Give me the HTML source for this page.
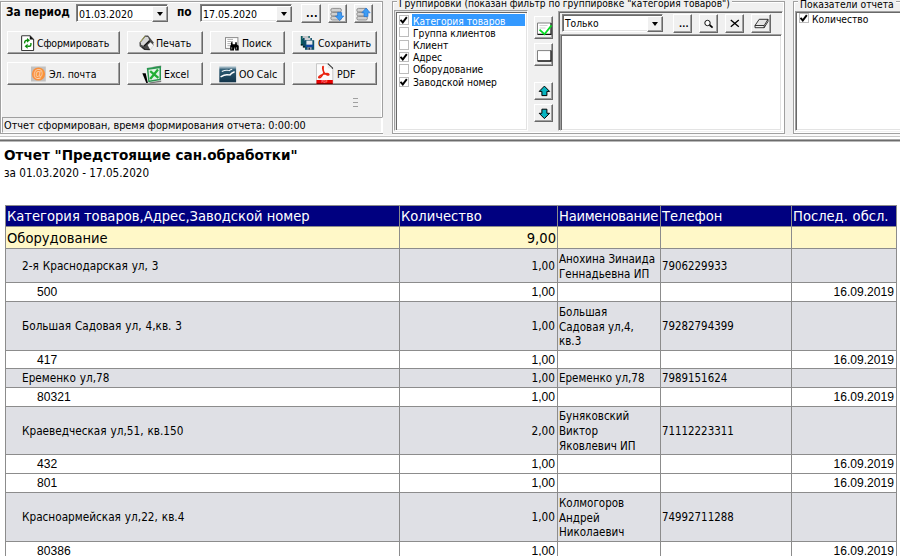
<!DOCTYPE html>
<html lang="ru"><head><meta charset="utf-8"><title>Отчет</title>
<style>
*{box-sizing:border-box;margin:0;padding:0}
html,body{width:900px;height:556px;overflow:hidden;background:#fff}
body{position:relative;font-family:"DejaVu Sans Condensed","DejaVu Sans","Liberation Sans",sans-serif;font-stretch:condensed;font-size:10px;color:#000}
.abs{position:absolute}
#top{left:0;top:0;width:900px;height:134px;background:#f0f0f0}
.btn{position:absolute;height:23px;background:#f0f0f0;border:1px solid;border-color:#fff #696969 #696969 #fff;box-shadow:inset -1px -1px 0 #a0a0a0;white-space:nowrap}
.btn span{position:absolute;top:5px;line-height:13px;font-size:10.5px}
.btn svg{position:absolute}
.t{position:absolute;white-space:nowrap;line-height:12px}
.inp{position:absolute;background:#fff;border:1px solid;border-color:#828282 #fff #fff #828282;box-shadow:inset 1px 1px 0 #696969, inset -1px -1px 0 #e3e3e3}
.dd{position:absolute;right:-1px;top:1px;bottom:-1px;width:16px;background:#f0f0f0;border:1px solid;border-color:#fff #696969 #696969 #fff;box-shadow:inset -1px -1px 0 #a0a0a0}
.dd:after{content:"";position:absolute;left:4px;top:5px;border:3.5px solid transparent;border-top:4px solid #000;border-bottom:0}
.gb{position:absolute;border:1px solid #a0a0a0;box-shadow:inset 0 0 0 1px #fff}
.lb{position:absolute;background:#fff;border:1px solid;border-color:#a0a0a0 #fff #fff #a0a0a0;box-shadow:inset 1px 1px 0 #696969, inset -1px -1px 0 #e3e3e3}
.cb{position:absolute;width:10px;height:10px;background:#fff;border:1px solid #bcbcbc}
table{position:absolute;left:5px;top:205px;border-collapse:collapse;table-layout:fixed;width:892px}
td{border:1px solid #8c8c8c;padding:0 1px 0 1px;vertical-align:middle;font-size:11.7px;line-height:14px;overflow:hidden;word-spacing:0.6px}
tr.h td{background:#000080;color:#fff;font-size:14.6px;line-height:18px;white-space:nowrap;padding:0 0 0 1px;word-spacing:0}
tr.y td{background:#fff8c8;font-size:14.6px;line-height:18px;padding:0 1px 0 1px}
tr.g td{background:#dfe0e5}
tr.w td{background:#fff;font-family:"Liberation Sans",sans-serif;font-size:12.1px}
td.r{text-align:right;padding-right:2px}
td.n{font-size:11.5px;word-spacing:0;line-height:14.7px}
td.m{padding-top:2px}
td.p{font-size:11.4px}
.li{font-size:10.2px}
td.i1{padding-left:16px}
td.i2{padding-left:31px}
</style></head><body>
<div id="top" class="abs"></div>
<!-- bottom edge of top area -->
<div class="abs" style="left:0;top:134px;width:900px;height:2px;background:#f9f9f9"></div>
<div class="abs" style="left:384px;top:134px;width:8px;height:1px;background:#f0f0f0"></div>
<div class="abs" style="left:786px;top:134px;width:7px;height:1px;background:#f0f0f0"></div>
<div class="abs" style="left:0;top:136px;width:900px;height:1px;background:#c6c6c6"></div>
<div class="abs" style="left:0;top:137px;width:900px;height:2px;background:#fff"></div>
<div class="abs" style="left:0;top:139px;width:900px;height:1px;background:#aaa"></div>
<div class="abs" style="left:0;top:140px;width:900px;height:1px;background:#6c6c6c"></div>
<div class="abs" style="left:0;top:141px;width:900px;height:1px;background:#b8b8b8"></div>

<!-- left panel -->
<div class="abs" style="left:0;top:1px;width:383px;height:133px;border:1px solid #a0a0a0;box-shadow:inset 0 0 0 1px #fff"></div>
<div class="t" style="left:6px;top:5px;font-weight:bold;font-size:11.8px;line-height:14px">За период</div>
<div class="inp" style="left:76px;top:4px;width:92px;height:18px"><div class="dd"></div></div>
<div class="t" style="left:79px;top:8px;font-size:10.5px;line-height:13px">01.03.2020</div>
<div class="t" style="left:177px;top:5px;font-weight:bold;font-size:11.8px;line-height:14px">по</div>
<div class="inp" style="left:200px;top:4px;width:92px;height:18px"><div class="dd"></div></div>
<div class="t" style="left:203px;top:8px;font-size:10.5px;line-height:13px">17.05.2020</div>
<div class="btn" style="left:301px;top:4px;width:20px;height:19px"><span style="left:4px;top:2px;font-weight:bold;letter-spacing:0.4px">...</span></div>
<div class="btn" style="left:328px;top:4px;width:19px;height:19px"></div>
<div class="btn" style="left:354px;top:4px;width:19px;height:19px"></div>

<div class="btn" style="left:7px;top:31px;width:113px"><span style="left:29px;letter-spacing:-0.15px">Сформировать</span></div>
<div class="btn" style="left:127px;top:31px;width:76px"><span style="left:28px">Печать</span></div>
<div class="btn" style="left:210px;top:31px;width:75px"><span style="left:31px">Поиск</span></div>
<div class="btn" style="left:292px;top:31px;width:85px"><span style="left:25px">Сохранить</span></div>
<div class="btn" style="left:7px;top:62px;width:113px"><span style="left:41px">Эл. почта</span></div>
<div class="btn" style="left:127px;top:62px;width:76px"><span style="left:36px">Excel</span></div>
<div class="btn" style="left:210px;top:62px;width:75px"><span style="left:28px">OO Calc</span></div>
<div class="btn" style="left:292px;top:62px;width:85px"><span style="left:44px">PDF</span></div>

<div class="abs" style="left:353px;top:98px;width:5px;height:1px;background:#a0a0a0"></div>
<div class="abs" style="left:353px;top:102px;width:5px;height:1px;background:#a0a0a0"></div>
<div class="abs" style="left:353px;top:106px;width:5px;height:1px;background:#a0a0a0"></div>

<div class="abs" style="left:2px;top:117px;width:381px;height:16px;border:1px solid;border-color:#a0a0a0 #fff #fff #a0a0a0"></div>
<div class="t" style="left:4px;top:119px;font-size:10.8px;line-height:13px">Отчет сформирован, время формирования отчета: 0:00:00</div>

<!-- groupings -->
<div class="gb" style="left:392px;top:1px;width:393px;height:133px"></div>
<div class="t" style="left:397px;top:-2px;background:#f0f0f0;padding:0 2px;font-size:10.1px">Группировки (показан фильтр по группировке "категория товаров")</div>
<div class="lb" style="left:394px;top:10px;width:134px;height:121px;box-shadow:inset 1px 1px 0 #e4e4e4, inset 2px 2px 0 #696969, inset -1px -1px 0 #e3e3e3"></div>
<div class="abs" style="left:412px;top:14px;width:113px;height:12px;background:#3399ff"></div>
<div class="cb c" style="left:399px;top:15px"><svg class="abs" style="left:0;top:0" width="8" height="8" viewBox="0 0 8 8"><path d="M.5 3.8l2.3 2.6 4-5.2" fill="none" stroke="#000" stroke-width="1.9"/></svg></div><div class="t li" style="left:413px;top:16px;color:#fff">Категория товаров</div>
<div class="cb" style="left:399px;top:27px"></div><div class="t li" style="left:413px;top:28px">Группа клиентов</div>
<div class="cb" style="left:399px;top:40px"></div><div class="t li" style="left:413px;top:40px">Клиент</div>
<div class="cb c" style="left:399px;top:52px"><svg class="abs" style="left:0;top:0" width="8" height="8" viewBox="0 0 8 8"><path d="M.5 3.8l2.3 2.6 4-5.2" fill="none" stroke="#000" stroke-width="1.9"/></svg></div><div class="t li" style="left:413px;top:52px">Адрес</div>
<div class="cb" style="left:399px;top:64px"></div><div class="t li" style="left:413px;top:64px">Оборудование</div>
<div class="cb c" style="left:399px;top:77px"><svg class="abs" style="left:0;top:0" width="8" height="8" viewBox="0 0 8 8"><path d="M.5 3.8l2.3 2.6 4-5.2" fill="none" stroke="#000" stroke-width="1.9"/></svg></div><div class="t li" style="left:413px;top:77px">Заводской номер</div>

<div class="btn" style="left:534px;top:16px;width:19px;height:23px"></div>
<div class="btn" style="left:534px;top:43px;width:19px;height:23px"></div>
<div class="btn" style="left:534px;top:82px;width:19px;height:18px"></div>
<div class="btn" style="left:534px;top:104px;width:19px;height:18px"></div>

<div class="abs" style="left:558px;top:11px;width:225px;height:120px;border:1px solid;border-color:#a0a0a0 #fff #fff #a0a0a0;box-shadow:inset 1px 1px 0 #696969"></div>
<div class="lb" style="left:560px;top:34px;width:222px;height:97px"></div>
<div class="inp" style="left:562px;top:14px;width:101px;height:18px"><div class="dd"></div></div>
<div class="t li" style="left:565px;top:18px">Только</div>
<div class="btn" style="left:673px;top:14px;width:19px;height:19px"><span style="left:5px;top:3px;font-size:9px;font-weight:bold;letter-spacing:0.2px">...</span></div>
<div class="btn" style="left:699px;top:14px;width:19px;height:19px"></div>
<div class="btn" style="left:725px;top:14px;width:19px;height:19px"></div>
<div class="btn" style="left:751px;top:14px;width:20px;height:19px"></div>

<!-- indicators -->
<div class="gb" style="left:793px;top:1px;width:120px;height:133px"></div>
<div class="t" style="left:798px;top:-2px;background:#f0f0f0;padding:0 2px;font-size:10.3px">Показатели отчета</div>
<div class="lb" style="left:795px;top:11px;width:120px;height:120px"></div>
<div class="cb c" style="left:799px;top:13px"><svg class="abs" style="left:0;top:0" width="8" height="8" viewBox="0 0 8 8"><path d="M.5 3.8l2.3 2.6 4-5.2" fill="none" stroke="#000" stroke-width="1.9"/></svg></div><div class="t li" style="left:812px;top:14px">Количество</div>

<!-- icons -->
<svg class="abs" style="left:21px;top:35px" width="14" height="16" viewBox="0 0 14 16"><path d="M1.4 .8h7.6l3.6 3.6v10.4q0 .8-.8.8h-10.4q-.8 0-.8-.8v-13.2q0-.8.8-.8z" fill="#fff" stroke="#3a3a3a" stroke-width="1.1"/><path d="M8.8 .8v3.8h3.8z" fill="#111"/><path d="M3.6 8.4q-.2-3.2 2.8-3.2" fill="none" stroke="#0a8a0a" stroke-width="1.4"/><path d="M6 2.9l3 2.4-3 2.4z" fill="#0a8a0a"/><path d="M9.9 8v1.8q0 1.5-1.5 1.5h-2" fill="none" stroke="#0a8a0a" stroke-width="1.4"/><path d="M6.6 8.8l-3 2.5 3 2.5z" fill="#0a8a0a"/></svg>
<svg class="abs" style="left:139px;top:35px" width="16.8" height="16.8" viewBox="0 0 16 16"><path d="M.4 7.2L5.6.4h3l5.6 7-1 1.2 1 1-4 5-5.2-.4-4.4-3.6z" fill="#4a4a4a"/><path d="M1.8 6.8L6 1.6l2.6.4 1.2 3-5.2 5.4-2.6-1z" fill="#d6d6d6"/><path d="M1.4 6.4L5.6 1.2" stroke="#b4b050" stroke-width=".9"/><path d="M4.6 10.6L10 5.4" stroke="#111" stroke-width="1.3"/><path d="M8.2 9.6l2.8-2.6 3 3-3.4 4z" fill="#f6f6f6"/><path d="M3 11.5l2.5 2 4.5.3" stroke="#222" stroke-width="1" fill="none"/></svg>
<svg class="abs" style="left:225px;top:37px" width="15" height="14" viewBox="0 0 15 14"><rect x=".5" y=".6" width="12.4" height="10.8" fill="#fff" stroke="#8c8c8c" stroke-width="1"/><path d="M2.4 2.4h5.6M2.4 4.5h5.6M2.4 6.6h4M2.4 8.7h3" stroke="#a8a8a8" stroke-width=".9"/><path d="M6 5.2h1.6v2h2.6v-2h1.6v2.2l1.9 1.4v4.8h-3.5v-2.8h-1.2v2.8h-3.8v-4.8l.8-1.4z" fill="#000"/><rect x="6.2" y="10.2" width="1" height="2.2" fill="#777"/><rect x="11" y="10.2" width="1" height="2.2" fill="#777"/></svg>
<svg class="abs" style="left:300px;top:36px" width="15" height="14" viewBox="0 0 15 14"><rect x=".8" y="0" width="9" height="9.4" fill="#0a5a5e"/><rect x="2.6" y="0" width="5.8" height="3" fill="#c4c4c8"/><rect x=".8" y="8.4" width="2" height="1" fill="#000"/><rect x="2.9" y="2" width="9" height="9.4" fill="#0c4c66"/><rect x="4.6" y="2" width="5.8" height="2.6" fill="#d0d0d4"/><rect x="2.9" y="10.4" width="2" height="1" fill="#000"/><rect x="5" y="4.2" width="9.2" height="9.6" fill="#0e5068"/><rect x="6.4" y="4.6" width="6" height="4.2" fill="#e6e6ec"/><rect x="6" y="8.8" width="7.2" height="2.2" fill="#1246a4"/><rect x="7.4" y="11.2" width="4.2" height="2.6" fill="#9ea0b8"/><rect x="8.6" y="11.6" width="1.3" height="2" fill="#222"/></svg>
<svg class="abs" style="left:31px;top:66px" width="15" height="16" viewBox="0 0 15 16"><rect x="0" y=".5" width="14.8" height="15" fill="#c2c2c2"/><circle cx="7.5" cy="8" r="6.6" fill="#f9903c"/><text x="7.5" y="11.3" font-family="Liberation Sans,sans-serif" font-size="10" font-weight="bold" fill="#fdd4b0" text-anchor="middle">@</text></svg>
<svg class="abs" style="left:142px;top:65px" width="20" height="19" viewBox="0 0 20 19"><path d="M10 2L19.2 .4v2z" fill="#8a8a8a"/><path d="M7 17.6l12.2-2.2v1.6l-11 1.6z" fill="#7a7a7a"/><path d="M.3 8.2h3.4l2.2 9.9h-1.6z" fill="#000"/><path d="M4.8 3L19 1.1v14L6.3 17.3z" fill="#2a9650"/><path d="M6.5 4.8l11-1.5v10.4l-10 1.7z" fill="#e4f2e6"/><path d="M8.2 6.2l8.2 6.6M16 4.6L8.2 14" stroke="#22ae34" stroke-width="2.3"/></svg>
<svg class="abs" style="left:219px;top:66px" width="18" height="17" viewBox="0 0 18 17"><defs><linearGradient id="oo" x1="0" y1="0" x2="0" y2="1"><stop offset="0" stop-color="#d4e0e6"/><stop offset=".22" stop-color="#2e5c74"/><stop offset="1" stop-color="#12344a"/></linearGradient></defs><rect x=".3" y=".1" width="16.8" height="16.2" fill="url(#oo)"/><path d="M2.8 5.5Q6 4 8.2 4.2T10 4.9Q11.5 3.6 13.2 3.3" fill="none" stroke="#f4f6f8" stroke-width="1.1"/><path d="M1.6 10.8Q5.5 8.6 8.2 8.7T10.4 9.5Q12.6 6.6 15.6 5.7" fill="none" stroke="#fff" stroke-width="1.5"/></svg>
<svg class="abs" style="left:316px;top:63px" width="18" height="22" viewBox="0 0 18 22"><path d="M.5 .7h11.3l5 4.8v15.6h-16.3z" fill="#fbfbfb" stroke="#b4b4b4" stroke-width=".7"/><path d="M11.8 .7l5 4.8" stroke="#1a1a1a" stroke-width="1.1"/><path d="M11.8 1.2v4h4.4z" fill="#e8e8e8"/><rect x=".5" y="17" width="16.3" height="4.1" fill="#e80000"/><rect x=".5" y="20.3" width="16.3" height=".9" fill="#500"/><text x="8.6" y="20" font-family="Liberation Sans,sans-serif" font-size="3" font-weight="bold" fill="#ff8c8c" text-anchor="middle">PDF</text><path d="M7.4 3.1C6 3.3 6.6 6.8 7.9 9.2C6.6 12.2 4.4 15 3 14.8C1.8 14.4 3.6 12.4 7.6 11.2C10 10.4 12.9 10.2 13 11.5C13 12.8 10.4 12 8.2 9.8C7 8 6.8 4 7.7 3.2" fill="none" stroke="#ea2410" stroke-width="1.4"/></svg>
<svg class="abs" style="left:329px;top:5px" width="17" height="17" viewBox="0 0 17 17"><rect x="1.8" y="3.4" width="10.6" height="3.6" rx="1.6" fill="#d0d0d0" stroke="#7c7c7c" stroke-width=".8"/><rect x="1.8" y="7.4" width="10.6" height="3.6" rx="1.6" fill="#d0d0d0" stroke="#7c7c7c" stroke-width=".8"/><rect x="1.8" y="11.4" width="10.6" height="3.6" rx="1.6" fill="#d0d0d0" stroke="#7c7c7c" stroke-width=".8"/><path d="M8.6 7.4h4v3.6h2.2l-4.2 4.6-4.2-4.6h2.2z" fill="#3c9cf4" stroke="#1c6cd0" stroke-width=".6"/></svg>
<svg class="abs" style="left:355px;top:5px" width="17" height="17" viewBox="0 0 17 17"><rect x="1.8" y="3.4" width="10.6" height="3.6" rx="1.6" fill="#d0d0d0" stroke="#7c7c7c" stroke-width=".8"/><rect x="1.8" y="7.4" width="10.6" height="3.6" rx="1.6" fill="#d0d0d0" stroke="#7c7c7c" stroke-width=".8"/><rect x="1.8" y="11.4" width="10.6" height="3.6" rx="1.6" fill="#d0d0d0" stroke="#7c7c7c" stroke-width=".8"/><path d="M9 11.6h4v-3.8h2.2l-4.2-4.8-4.2 4.8h2.2z" fill="#3c9cf4" stroke="#1c6cd0" stroke-width=".6"/></svg>
<svg class="abs" style="left:536px;top:21px" width="17" height="15" viewBox="0 0 17 15"><rect x="1.5" y="2" width="13.5" height="11.3" fill="#fff"/><path d="M1.5 13.3V2h13.5" fill="none" stroke="#808080" stroke-width="1"/><path d="M1.5 13.3h13.5V2" fill="none" stroke="#111" stroke-width="1.2"/><path d="M3.5 4.5h8M3.5 7h6" stroke="#c4c4c4" stroke-width=".8"/><path d="M3.5 8.6l5 4.6 7-8.8" fill="none" stroke="#08dc24" stroke-width="1.8"/></svg>
<svg class="abs" style="left:536px;top:49px" width="17" height="14" viewBox="0 0 17 14"><rect x="1.5" y="1.6" width="13.5" height="10.4" fill="#fff"/><path d="M1.5 12V1.6h13.5" fill="none" stroke="#808080" stroke-width="1"/><path d="M1.5 12h13.5V1.6" fill="none" stroke="#111" stroke-width="1.3"/></svg>
<svg class="abs" style="left:538px;top:85px" width="13" height="12" viewBox="0 0 13 12"><path d="M6.4 1.1l5.2 5.3h-2.7v4.2h-5v-4.2h-2.7z" fill="#08b4c0" stroke="#000" stroke-width="1"/></svg>
<svg class="abs" style="left:538px;top:108px" width="13" height="12" viewBox="0 0 13 12"><path d="M6.4 10.6l5.2-5.3h-2.7v-4.1h-5v4.1h-2.7z" fill="#08b4c0" stroke="#000" stroke-width="1"/></svg>
<svg class="abs" style="left:703px;top:18px" width="12" height="12" viewBox="0 0 12 12"><circle cx="4.5" cy="5" r="2.7" fill="#fff" stroke="#111" stroke-width="1"/><path d="M6.6 7l3 2.6" stroke="#000" stroke-width="1.7"/></svg>
<svg class="abs" style="left:729px;top:18px" width="12" height="12" viewBox="0 0 12 12"><path d="M1.8 2l8 6.8M9.8 2l-8 6.8" stroke="#000" stroke-width="1.3"/></svg>
<svg class="abs" style="left:753px;top:17px" width="17" height="13" viewBox="0 0 17 13"><path d="M2 8.5l4.2-6.2h8.8l-3.8 6.2z" fill="#e4e4e4" stroke="#222" stroke-width=".9"/><path d="M2 8.5v2.2h9.2l3.8-6.2v-2.2" fill="none" stroke="#222" stroke-width=".9"/><path d="M11.2 8.5v2.2" stroke="#222" stroke-width=".9"/></svg>
<!-- report -->
<div class="t" style="left:4px;top:147px;font-family:'DejaVu Sans','Liberation Sans',sans-serif;font-stretch:normal;font-weight:bold;font-size:13.6px;line-height:16px">Отчет "Предстоящие сан.обработки"</div>
<div class="t" style="left:4px;top:166px;font-size:11.6px;line-height:14px">за 01.03.2020 - 17.05.2020</div>

<table>
<colgroup><col style="width:394px"><col style="width:158px"><col style="width:103px"><col style="width:131px"><col style="width:105px"></colgroup>
<tr class="h" style="height:21px"><td>Категория товаров,Адрес,Заводской номер</td><td>Количество</td><td style="letter-spacing:-0.25px">Наименование</td><td>Телефон</td><td style="word-spacing:0.6px">Послед. обсл.</td></tr>
<tr class="y" style="height:22px"><td>Оборудование</td><td class="r">9,00</td><td></td><td></td><td></td></tr>
<tr class="g" style="height:34px"><td class="i1">2-я Краснодарская ул, 3</td><td class="r">1,00</td><td class="n m">Анохина Зинаида Геннадьевна ИП</td><td class="p">7906229933</td><td></td></tr>
<tr class="w" style="height:19px"><td class="i2">500</td><td class="r">1,00</td><td></td><td></td><td class="r">16.09.2019</td></tr>
<tr class="g" style="height:49px"><td class="i1">Большая Садовая ул, 4,кв. 3</td><td class="r">1,00</td><td class="n m">Большая<br>Садовая ул,4,<br>кв.3</td><td class="p">79282794399</td><td></td></tr>
<tr class="w" style="height:18px"><td class="i2">417</td><td class="r">1,00</td><td></td><td></td><td class="r">16.09.2019</td></tr>
<tr class="g" style="height:19px"><td class="i1">Еременко ул,78</td><td class="r">1,00</td><td class="n">Еременко ул,78</td><td class="p">7989151624</td><td></td></tr>
<tr class="w" style="height:19px"><td class="i2">80321</td><td class="r">1,00</td><td></td><td></td><td class="r">16.09.2019</td></tr>
<tr class="g" style="height:48px"><td class="i1">Краеведческая ул,51, кв.150</td><td class="r">2,00</td><td class="n m">Буняковский Виктор Яковлевич ИП</td><td class="p">71112223311</td><td></td></tr>
<tr class="w" style="height:19px"><td class="i2">432</td><td class="r">1,00</td><td></td><td></td><td class="r">16.09.2019</td></tr>
<tr class="w" style="height:19px"><td class="i2">801</td><td class="r">1,00</td><td></td><td></td><td class="r">16.09.2019</td></tr>
<tr class="g" style="height:49px"><td class="i1">Красноармейская ул,22, кв.4</td><td class="r">1,00</td><td class="n m">Колмогоров Андрей Николаевич</td><td class="p">74992711288</td><td></td></tr>
<tr class="w" style="height:19px"><td class="i2">80386</td><td class="r">1,00</td><td></td><td></td><td class="r">16.09.2019</td></tr>
</table>
</body></html>
